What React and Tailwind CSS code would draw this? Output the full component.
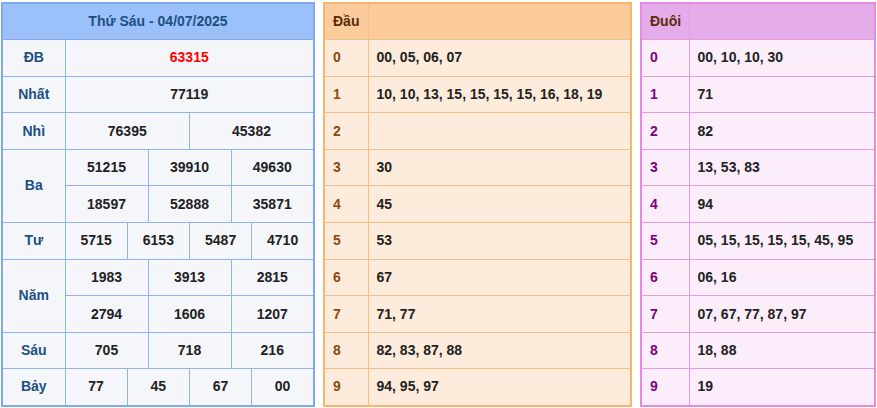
const font = { fontFamily: '"Liberation Sans", Arial, sans-serif' }

const Td = ({ children, className = '', ...p }) => (
  <td {...p} className={`border border-[#8db4ef] text-center text-[14px] font-bold text-[#222] ${className}`}>{children}</td>
)

function Left() {
  const rows = [
    ['Ba', ['51215', '39910', '49630'], ['18597', '52888', '35871']],
    ['Năm', ['1983', '3913', '2815'], ['2794', '1606', '1207']],
  ]
  const L = ({ children, rs }) => (
    <Td rowSpan={rs} className="!text-[#1c4f82]">{children}</Td>
  )
  return (
    <table className="w-[314px] table-fixed border-collapse border-2 border-[#7ea9ee] bg-[#f4f6fa] [&_tr]:h-[36.6px]">
      <colgroup>
        <col className="w-[63px]" />
        {Array.from({ length: 12 }).map((_, i) => <col key={i} />)}
      </colgroup>
      <tbody>
        <tr className="bg-[#9cc1fa]">
          <Td colSpan={13} className="!text-[#1c4f82] !border-[#7ea9ee]">Thứ Sáu - 04/07/2025</Td>
        </tr>
        <tr><L>ĐB</L><Td colSpan={12} className="!text-[#f00]">63315</Td></tr>
        <tr><L>Nhất</L><Td colSpan={12}>77119</Td></tr>
        <tr><L>Nhì</L><Td colSpan={6}>76395</Td><Td colSpan={6}>45382</Td></tr>
        <tr><L rs={2}>Ba</L>{rows[0][1].map(v => <Td key={v} colSpan={4}>{v}</Td>)}</tr>
        <tr>{rows[0][2].map(v => <Td key={v} colSpan={4}>{v}</Td>)}</tr>
        <tr><L>Tư</L>{['5715', '6153', '5487', '4710'].map(v => <Td key={v} colSpan={3}>{v}</Td>)}</tr>
        <tr><L rs={2}>Năm</L>{rows[1][1].map(v => <Td key={v} colSpan={4}>{v}</Td>)}</tr>
        <tr>{rows[1][2].map(v => <Td key={v} colSpan={4}>{v}</Td>)}</tr>
        <tr><L>Sáu</L>{['705', '718', '216'].map(v => <Td key={v} colSpan={4}>{v}</Td>)}</tr>
        <tr><L>Bảy</L>{['77', '45', '67', '00'].map(v => <Td key={v} colSpan={3}>{v}</Td>)}</tr>
      </tbody>
    </table>
  )
}

function Side({ title, data, w, cw, c }) {
  return (
    <table className={`${w} border-collapse border-2 ${c.outer} ${c.body} [&_tr]:h-[36.6px]`}>
      <tbody>
        <tr className={c.head}>
          <td className={`${cw} border ${c.line} pl-[8px] text-[14px] font-bold text-[#5a2b0a]`}>{title}</td>
          <td className={`border ${c.line}`}></td>
        </tr>
        {data.map((d, i) => (
          <tr key={i}>
            <td className={`border ${c.line} pl-[8px] text-[14px] font-bold ${c.num}`}>{i}</td>
            <td className={`border ${c.line} pl-[8px] text-[14px] font-bold text-[#222]`}>{d}</td>
          </tr>
        ))}
      </tbody>
    </table>
  )
}

export default function App() {
  const dau = ['00, 05, 06, 07', '10, 10, 13, 15, 15, 15, 15, 16, 18, 19', '', '30', '45', '53', '67', '71, 77', '82, 83, 87, 88', '94, 95, 97']
  const duoi = ['00, 10, 10, 30', '71', '82', '13, 53, 83', '94', '05, 15, 15, 15, 15, 45, 95', '06, 16', '07, 67, 77, 87, 97', '18, 88', '19']
  return (
    <div style={font} className="flex items-start gap-[8px] pl-[1px] pt-[2px] bg-white w-[877px] h-[408px]">
      <Left />
      <Side title="Đầu" data={dau} w="w-[309px]" cw="w-[44px]"
        c={{ outer: 'border-[#f8b56f]', line: 'border-[#f6bd85]', body: 'bg-[#fdecdc]', head: 'bg-[#fbcb9b]', num: 'text-[#8a4a12]' }} />
      <Side title="Đuôi" data={duoi} w="w-[236px]" cw="w-[48px]"
        c={{ outer: 'border-[#e28be0]', line: 'border-[#e79ae3]', body: 'bg-[#fbeefa]', head: 'bg-[#e4ace8]', num: 'text-[#800080]' }} />
    </div>
  )
}
